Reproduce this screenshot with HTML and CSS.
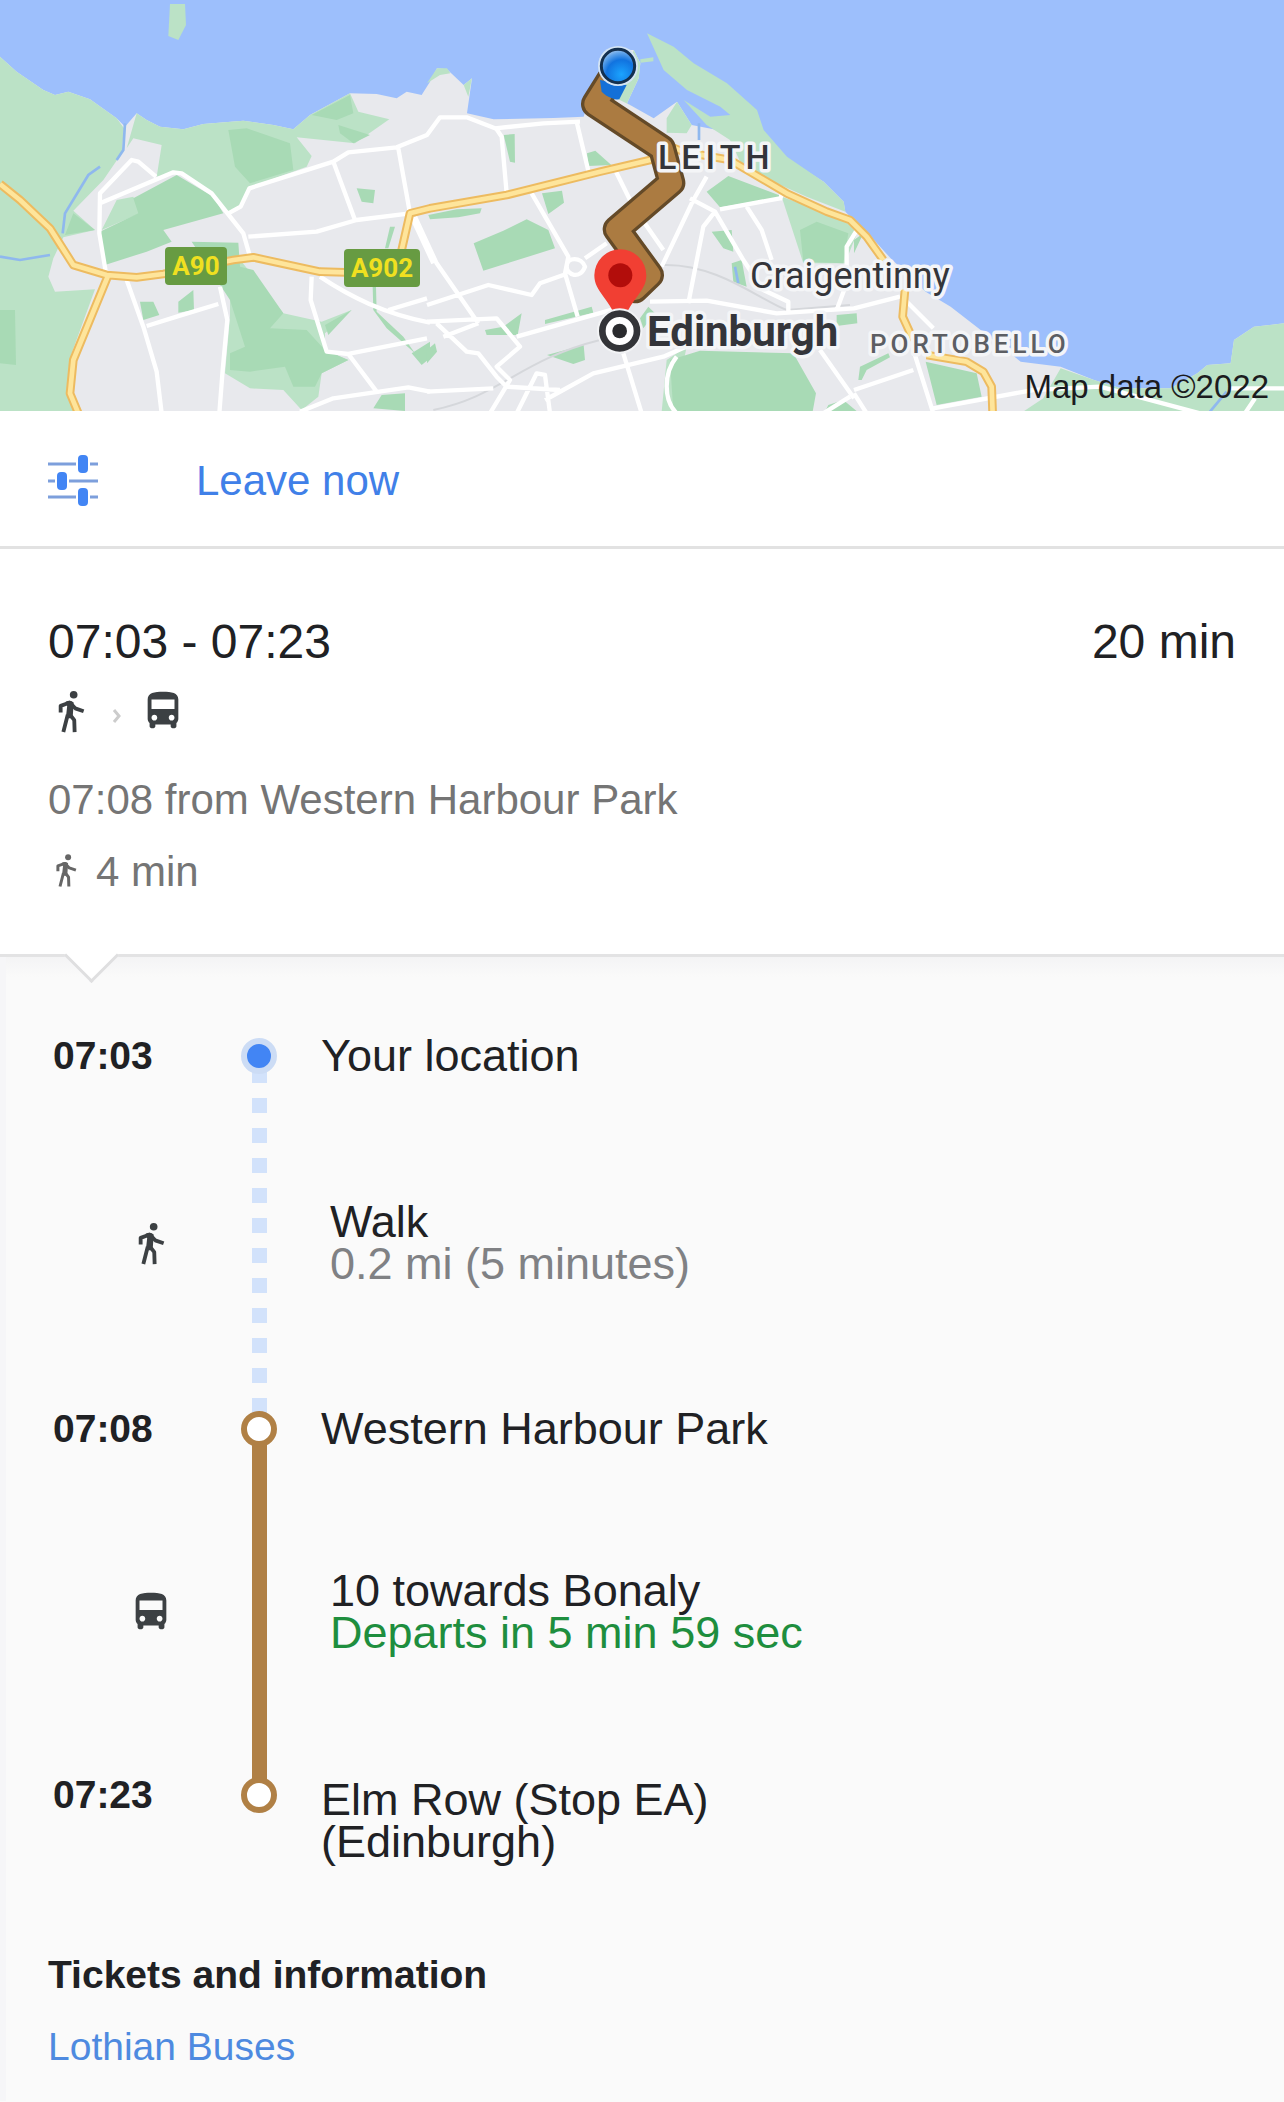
FILE: index.html
```html
<!DOCTYPE html>
<html lang="en">
<head>
<meta charset="utf-8">
<meta name="viewport" content="width=device-width, initial-scale=1">
<title>Transit directions</title>
<link rel="stylesheet" href="styles.css">
</head>
<body>
<svg class="sprite" aria-hidden="true">
  <symbol id="walk" viewBox="0 0 24 24"><circle cx="13.400" cy="3.500" r="2"/><path fill="none" stroke="currentColor" stroke-width="2" stroke-linejoin="round" d="M6.600 12.800V9.300L11.400 7.600 14.200 10.600 18.600 12.100M10.300 14L8 23M11.600 14L13.700 16.800 13.900 23"/><path d="M9.200 7.200Q11.600 5.900 13.400 7.500L13 13.500 12.600 15.800H9.300L10 9.500Z"/></symbol>
  <symbol id="bus" viewBox="0 0 24 24"><path d="M4 16c0 .88.39 1.67 1 2.220V20c0 .55.45 1 1 1h1c.55 0 1-.45 1-1v-1h8v1c0 .55.45 1 1 1h1c.55 0 1-.45 1-1v-1.780c.61-.55 1-1.340 1-2.220V6c0-3.500-3.580-4-8-4s-8 .5-8 4v10zm3.500 1c-.83 0-1.500-.67-1.500-1.500S6.670 14 7.500 14s1.500.67 1.500 1.500S8.330 17 7.500 17zm9 0c-.83 0-1.500-.67-1.500-1.500s.67-1.500 1.500-1.500 1.500.67 1.500 1.500-.67 1.500-1.500 1.500zm1.500-6H6V6h12v5z"/></symbol>
</svg>

<main class="page">
  <svg class="map" viewBox="0 0 1284 411" preserveAspectRatio="xMidYMid slice" role="img" aria-label="Map of the route from Leith to Edinburgh">
    <defs>
      <radialGradient id="ball" cx=".6" cy=".75" r=".8">
        <stop offset="0" stop-color="#1ba4ff"/><stop offset=".55" stop-color="#1173df"/><stop offset=".8" stop-color="#5fa3ea"/><stop offset="1" stop-color="#b5cff0"/>
      </radialGradient>
    </defs>
    <g transform="scale(.33333)">
      <path class="land" d="M0 170L50 215 130 270 165 285 205 275 270 298 350 355 375 380 410 340 440 360 480 380 550 388 610 372 730 362 820 375 880 388 930 345 1050 280 1130 282 1190 295 1220 275 1265 285 1290 245 1311 205 1341 208 1391 255 1416 235 1401 340 1481 358 1661 354 1751 350 1781 250 1860 150 1901 150 1921 190 1916 235 1881 310 1961 355 2031 305 2075 375 2180 395 2320 450 2471 545 2531 605 2536 635 2571 670 2622 720 2672 775 2777 875 2852 920 2942 990 3062 1085 3182 1100 3282 1140 3362 1165 3512 1165 3592 1120 3622 1095 3692 1090 3702 1020 3762 980 3852 970V1240H0Z"/>
      <g class="park-light">
        <path d="M0 170L50 215 130 270 165 285 205 275 270 298 350 355 372 385 365 460 310 540 220 632 285 690 190 712 160 775 145 830 165 875 285 868 215 1060 205 1170 235 1240H0Z"/>
        <path d="M410 340L440 360 480 380 550 388 610 372 730 362 820 375 880 388 930 345 1050 280 1075 335 1168 358 1065 430 890 412 935 468 920 500 750 562 720 625 690 640 630 580 540 515 470 530 485 435 400 415 380 445Z"/>
        <path d="M305 690L350 600 400 590 420 640ZM690 790L725 785 850 940 965 965 1055 930 975 1000 975 1050 1045 1080 965 1120 955 1190 905 1230 850 1170 750 1165 675 1120 690 950Z"/>
        <path d="M1281 250L1311 205 1341 205 1351 220 1320 225ZM1391 255L1416 235 1405 290ZM1870 250L1901 150 1921 190 1916 235 1881 310 1961 355 1900 320 1840 290ZM2000 355L2031 305 2075 375 2060 400 2000 398Z"/>
        <path d="M1941 100L2021 140 2081 190 2181 250 2271 330 2291 390 2361 470 2471 545 2531 605 2536 635 2420 590 2230 505 2190 420 2120 375 2051 300 2131 350 2191 345 2161 320 2061 270 1991 210ZM1921 178L1960 172V184L1921 188Z"/>
        <path d="M2345 590L2430 620 2530 655 2571 700 2535 790 2410 790ZM2000 1080L2060 1040 2020 1235H1985ZM3062 1240L3130 1195 3182 1105 3282 1140 3362 1165 3512 1165 3592 1120 3622 1095 3692 1090 3702 1020 3762 980 3852 970V1240Z"/>
        <path d="M510 12H555L558 75 535 120 505 108Z"/>
      </g>
      <g class="park">
        <path d="M300 695L415 640 400 595 530 525 640 590 670 640 490 690 515 725 440 755 315 795ZM685 390L740 385 870 430 880 510 750 550 705 500ZM935 345L1050 285 1060 340 1010 360ZM1015 375L1110 405 1060 430 1020 400ZM1070 565L1125 570 1120 610 1085 605ZM420 905L460 905 478 945 430 960ZM535 905L580 870 582 930 535 938ZM575 725L715 728 720 800 760 810 850 940 810 985 920 990 975 1050 1045 1080 965 1120 945 1160 880 1160 855 1100 750 1115 690 1110 690 1060 735 1040 690 900ZM0 930L45 930 48 1095 0 1090ZM220 640L285 690 195 705ZM1145 1185L1215 1180 1215 1233 1120 1225ZM1235 1060L1290 1025 1290 1075 1265 1095ZM975 975L1055 930 985 1005ZM1170 680L1185 680 1165 745H1155ZM1118 860H1128L1130 935 1210 1010 1245 1060 1160 985 1120 930Z"/>
        <path d="M1511 405L1544 402 1545 488 1530 485ZM1761 460L1786 452 1834 495 1765 498ZM1626 580L1686 572 1692 608 1645 642ZM1421 730L1510 692 1580 658 1645 690 1665 745 1505 795 1450 812ZM1285 645L1370 628 1445 625 1440 640 1375 652 1290 658ZM1635 960L1775 920 1780 938 1635 972ZM1455 990L1510 980 1565 940 1553 1005 1460 1005ZM1641 1065L1751 1035 1755 1080 1720 1092ZM1281 1050L1305 1030 1311 1055 1281 1090ZM2120 575L2185 528 2350 590 2160 622ZM2135 695L2195 690 2200 755 2170 745ZM2400 690L2450 665 2545 700 2530 790 2410 785ZM2195 790L2225 780 2240 860 2200 845ZM1920 955L1945 920 1965 940 1930 985ZM2010 1080L2100 1052 2380 1060 2448 1180 2438 1235H2020ZM2510 945L2570 940 2572 970 2510 978ZM2485 1215L2530 1200 2572 1235H2475ZM2777 1085L2930 1120 2945 1190 2810 1215ZM2580 1100L2665 1060 2670 1072 2600 1110 2585 1140H2575ZM2562 720L2590 700 2562 760Z"/>
      </g>
      <path class="river" d="M375 370L370 450 350 480M300 500L265 525 195 640 188 700M0 770L60 780 150 765M2205 800L2215 850M2097 370V420M3630 1235L3680 1175"/>
      <path class="rail" d="M1300 1230C1500 1190 1560 1080 1800 1020M1990 795C2150 790 2280 900 2360 930L2550 915"/>
      <path class="street" d="M318 820L298 700 300 580 395 480 415 485 468 530M300 610L520 517 545 520 635 580 730 700 750 770M685 640L722 620 748 565 1000 485 1045 457 1190 442 1281 405 1320 352 1400 352 1485 385 1630 370 1740 365M1000 485L1065 660M1195 445L1230 640M745 710L950 695 1070 660 1230 640L1300 790M380 840L430 980 470 1115 485 1240M440 978L530 950 655 912M660 860L682 960 668 1110 658 1240M960 830C1050 890 1150 940 1290 968M935 830L932 900 980 1055 1045 1062 1281 1015M1045 1062L1130 1175M1165 930L1281 895M900 1235L1000 1195 1225 1162 1290 1175"/>
      <path class="street" d="M1488 385L1505 410 1520 580M1731 370L1768 525M1595 580L1705 770 1695 820 1733 950M1245 650L1310 790 1435 970M1281 915L1465 855 1595 885 1620 850 1690 825M1700 800C1700 770 1745 770 1755 800C1740 840 1700 825 1700 800M1755 775L1820 730M1848 515L1900 620 1990 750M2120 530L2080 600 1985 800M2070 595L2145 635 2230 780 2290 870 2365 905V940M2145 635L2110 680 2065 910M2160 628L2340 595M2240 620L2285 690 2315 780M2350 565L2340 600M1281 965L1490 955 1560 1040 1490 1100 1530 1140 1470 1240M1310 970L1400 1055 1435 1060 1490 1130 1520 1160 1680 1170M1281 1175L1480 1165M1330 1010L1435 970M1550 1010L1850 925M1550 1240L1610 1120 1635 1125 1650 1240M1635 1200L1780 1120 1990 1070 2070 1035M1870 1060L1925 1240M1950 905L2120 902 2330 940 2562 925 2700 890M2030 1070C1990 1120 1990 1200 2030 1240M2460 1050L2562 1195M2470 1240L2550 1190M2571 690L2540 740V850L2510 930M2710 895L2800 985M2740 1050L2800 1240M2562 1170L2740 1110M2562 1180L2600 1240M2800 1225L3100 1170 3300 1160 3600 1240M3690 1165H3852M3735 1240L3765 1195"/>
      <path class="road-edge" d="M0 552L60 600 150 685 220 795 320 825 410 832 490 822 700 780 760 772 960 815 1060 818M325 825L220 1080 210 1180 235 1240M1205 750L1230 640 1290 625 1520 585 1800 515 1960 478M1960 420L2050 455 2190 480 2360 580 2480 635 2550 660 2600 710 2650 780M2715 870L2708 950 2740 1020M2780 1065L2900 1085 2950 1115 2975 1160 2978 1240"/>
      <path class="road" d="M0 552L60 600 150 685 220 795 320 825 410 832 490 822 700 780 760 772 960 815 1060 818M325 825L220 1080 210 1180 235 1240M1205 750L1230 640 1290 625 1520 585 1800 515 1960 478M1960 420L2050 455 2190 480 2360 580 2480 635 2550 660 2600 710 2650 780M2715 870L2708 950 2740 1020M2780 1065L2900 1085 2950 1115 2975 1160 2978 1240"/>
      <path class="route-edge" d="M1830 240L1785 312 1986 445 2014 548 1850 688 1950 825 1905 868"/>
      <path class="route" d="M1830 240L1785 312 1986 445 2014 548 1850 688 1950 825 1905 868"/>
      <path class="ball-tail" d="M1800 240L1805 275C1825 295 1850 300 1858 298L1880 255Z"/>
      <circle class="ball-halo" cx="1854" cy="198" r="60"/>
      <circle class="ball" cx="1854" cy="198" r="50"/>
      <path class="pin" d="M1861 748a78 78 0 0 1 78 78c0 52-48 66-78 160c-30-94-78-108-78-160a78 78 0 0 1 78-78z"/>
      <circle class="pin-hole" cx="1861" cy="826" r="36"/>
      <circle class="city-halo" cx="1859" cy="993" r="68"/>
      <circle class="city-ring" cx="1859" cy="993" r="52"/>
      <circle class="city-dot" cx="1859" cy="993" r="22"/>
    </g>
    <rect class="badge" x="165" y="247" width="62" height="38" rx="4"/>
    <rect class="badge" x="344" y="249" width="76" height="38" rx="4"/>
    <text class="badge-text" x="196" y="275">A90</text>
    <text class="badge-text" x="382" y="277">A902</text>
    <text class="district" x="658" y="169">LEITH</text>
    <text class="suburb" x="750" y="288">Craigentinny</text>
    <text class="city" x="647" y="346">Edinburgh</text>
    <text class="town" x="870" y="353">PORTOBELLO</text>
    <text class="credit" x="1269" y="398">Map data ©2022</text>
  </svg>

  <div class="toolbar">
    <button class="tool" type="button" aria-label="Route options">
      <svg class="tune" viewBox="0 0 50 54" aria-hidden="true">
        <path class="tune-line" d="M0 10H28M42 10H50M0 27H7M21 27H50M0 43H28M42 43H50"/>
        <rect x="30" y="1" width="10" height="18" rx="4"/><rect x="9" y="18" width="10" height="18" rx="4"/><rect x="30" y="34" width="10" height="18" rx="4"/>
      </svg>
    </button>
    <button class="tool" type="button">Leave now</button>
  </div>

  <section class="summary">
    <h1 class="headline"><span>07:03 - 07:23</span><span>20 min</span></h1>
    <div class="modes">
      <svg class="icon"><use href="#walk"/></svg>
      <svg class="icon chevron" viewBox="0 0 46 46"><path d="M20 22L25 28 20 34"/></svg>
      <svg class="icon"><use href="#bus"/></svg>
    </div>
    <p class="note">07:08 from Western Harbour Park</p>
    <p class="note note-walk"><svg class="icon-small"><use href="#walk"/></svg>4 min</p>
  </section>

  <section class="details">
    <ol class="timeline">
      <li class="row">
        <time class="time">07:03</time>
        <span class="rail-cell"><span class="marker marker-start"></span></span>
        <span class="place">Your location</span>
      </li>
      <li class="row leg leg-walk">
        <svg class="icon leg-icon"><use href="#walk"/></svg>
        <span class="line line-walk"></span>
        <div class="info"><p>Walk</p><p class="muted">0.2 mi (5 minutes)</p></div>
      </li>
      <li class="row">
        <time class="time">07:08</time>
        <span class="rail-cell"><span class="marker"></span></span>
        <span class="place">Western Harbour Park</span>
      </li>
      <li class="row leg leg-bus">
        <svg class="icon leg-icon"><use href="#bus"/></svg>
        <span class="line"></span>
        <div class="info"><p>10 towards Bonaly</p><p class="live">Departs in 5 min 59 sec</p></div>
      </li>
      <li class="row">
        <time class="time">07:23</time>
        <span class="rail-cell"><span class="marker"></span></span>
        <span class="place place-end">Elm Row (Stop EA)<br>(Edinburgh)</span>
      </li>
    </ol>
    <div class="tickets">
      <h2 class="tickets-title">Tickets and information</h2>
      <a class="link" href="#">Lothian Buses</a>
    </div>
  </section>
</main>
</body>
</html>
```
FILE: styles.css
```css
* { box-sizing: border-box; }
body { margin: 0; background: #fafafa; color: #202124; font-family: "Liberation Sans", Arial, sans-serif; }
p, h1, h2, ol { margin: 0; padding: 0; font-weight: 400; }
ol { list-style: none; }
.sprite { position: absolute; width: 0; height: 0; }

/* Map */
.map { display: block; width: 100%; height: 411px; background: #9dbffc; }
.land { fill: #e8e9ed; }
.park-light { fill: #bbe2c6; }
.park { fill: #a8dab5; }
.river { fill: none; stroke: #8fb8ee; stroke-width: 8; }
.rail { fill: none; stroke: #d5d7db; stroke-width: 6; }
.street { fill: none; stroke: #fff; stroke-width: 13; stroke-linejoin: round; }
.road-edge { fill: none; stroke: #edbb60; stroke-width: 26; stroke-linejoin: round; }
.road { fill: none; stroke: #fee59b; stroke-width: 14; stroke-linejoin: round; }
.route-edge { fill: none; stroke: #644a28; stroke-width: 84; stroke-linejoin: round; stroke-linecap: round; }
.route { fill: none; stroke: #ab7b41; stroke-width: 64; stroke-linejoin: round; stroke-linecap: round; }
.ball-tail { fill: #1470d8; }
.ball-halo { fill: #d3e4f5; }
.ball { fill: url(#ball); stroke: #14304f; stroke-width: 9; }
.pin { fill: #f13f33; }
.pin-hole { fill: #b20d0b; }
.city-halo { fill: #f2f3f5; }
.city-ring { fill: #fff; stroke: #333438; stroke-width: 20; }
.city-dot { fill: #2a2b2e; }
.badge { fill: #679b42; }
.badge-text { font: 700 26px Roboto, sans-serif; fill: #f0e020; text-anchor: middle; }
.district, .suburb, .city, .town { font-family: Roboto, sans-serif; fill: #34353a; stroke: #f4f5f7; stroke-width: 7px; stroke-linejoin: round; paint-order: stroke; }
.district { font-size: 34px; font-weight: 500; letter-spacing: 5px; }
.suburb { font-size: 36px; }
.city { font-size: 42px; font-weight: 700; }
.town { font-size: 26px; font-weight: 500; letter-spacing: 4px; fill: #5c5e63; }
.credit { font-size: 33px; text-anchor: end; fill: #1b1c1e; }

/* Departure options */
.toolbar { display: flex; align-items: center; gap: 98px; padding: 46px 48px 41px; background: #fff; border-bottom: 3px solid #e2e2e2; }
.tool { display: flex; align-items: center; height: 48px; padding: 0; border: 0; background: none; color: #4080e8; font: inherit; font-size: 42px; line-height: 48px; cursor: pointer; }
.tune { display: block; width: 50px; height: 54px; fill: #4285f4; }
.tune-line { stroke: #7d9fdc; stroke-width: 3; }

/* Trip summary */
.summary { position: relative; padding: 65px 48px 58px; background: #fff; border-bottom: 3px solid #e3e3e4; }
.summary::after { content: ""; position: absolute; left: 72px; bottom: -21px; width: 36px; height: 36px; background: #fff; border: solid #dfdfe0; border-width: 0 3px 3px 0; transform: rotate(45deg); }
.headline { display: flex; justify-content: space-between; font-size: 48px; line-height: 56px; }
.modes { display: flex; margin: 18px 0 42px; }
.icon { display: block; width: 46px; height: 46px; fill: currentColor; color: #3c4043; }
.icon-small { width: 36px; height: 36px; margin-bottom: 4px; fill: currentColor; color: #666; }
.chevron { fill: none; stroke: #ccc; stroke-width: 3; }
.note { color: #757575; font-size: 42px; line-height: 48px; }
.note-walk { display: flex; align-items: center; gap: 12px; margin-top: 24px; }

/* Steps */
.details { padding: 78px 48px 30px 42px; background: linear-gradient(#f4f4f5, #fafafa 20px); border-left: 6px solid #f6f6f8; }
.row { display: grid; grid-template-columns: 192px 38px 1fr; align-items: start; font-size: 45px; line-height: 42px; }
.time { padding-left: 5px; font-size: 39px; font-weight: 700; }
.rail-cell { display: flex; align-items: center; justify-content: center; height: 42px; }
.marker { position: relative; z-index: 1; width: 36px; height: 36px; border: 6px solid #b08045; border-radius: 50%; background: #fff; }
.marker-start { border-color: #ccdcf5; background: #4285f4; }
.place { padding-left: 43px; }
.place-end { padding-top: 5px; }
.leg { align-items: center; }
.leg-walk { height: 331px; }
.leg-bus { height: 324px; }
.leg-icon { justify-self: end; margin-right: 66px; }
.line { align-self: stretch; justify-self: center; width: 15px; margin: -9px 0; background: #b08045; }
.line-walk { background: repeating-linear-gradient(#d2e2fb 0 15px, transparent 15px 30px); }
.info { padding-left: 52px; }
.muted { color: #808184; }
.live { color: #1e8e3e; }
.tickets { margin-top: 88px; font-size: 39px; line-height: 48px; }
.tickets-title { font-size: 39px; font-weight: 700; margin-bottom: 24px; }
.link { display: block; color: #4e8ae0; text-decoration: none; }
```
